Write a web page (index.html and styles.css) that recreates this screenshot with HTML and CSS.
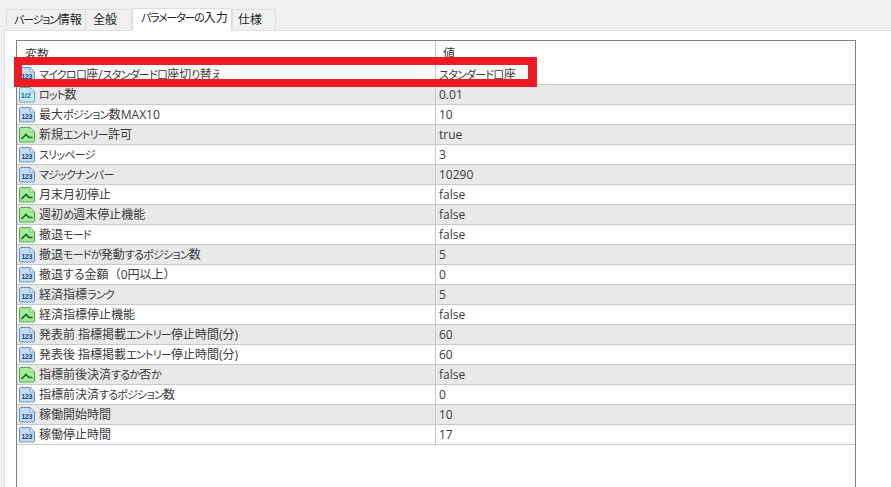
FILE: index.html
```html
<!DOCTYPE html>
<html lang="ja">
<head>
<meta charset="utf-8">
<title>パラメーターの入力</title>
<link rel="stylesheet" href="styles.css">
</head>
<body>
<svg class="defs" width="0" height="0" aria-hidden="true">
  <symbol id="i-int" viewBox="0 0 16 16">
    <path d="M0.5 2 Q0.5 0.5 2 0.5 H11 L15.5 5 V14 L14 15.5 L12.5 14.5 L11 15.5 L9.5 14.5 L8 15.5 L6.5 14.5 L5 15.5 L3.5 14.5 L2 15.5 L0.5 14.5 Z" fill="#c4dcf2" stroke="#5f8fc0"/>
    <path d="M11 0.5 V5 H15.5 Z" fill="#eaf3fb" stroke="#5f8fc0" stroke-width=".6"/>
    <text x="7.9" y="12.4" class="ic-t" fill="#0c3f7c">123</text>
  </symbol>
  <symbol id="i-dbl" viewBox="0 0 16 16">
    <path d="M0.5 2 Q0.5 0.5 2 0.5 H11 L15.5 5 V14 L14 15.5 L12.5 14.5 L11 15.5 L9.5 14.5 L8 15.5 L6.5 14.5 L5 15.5 L3.5 14.5 L2 15.5 L0.5 14.5 Z" fill="#bfecf3" stroke="#59aabf"/>
    <path d="M11 0.5 V5 H15.5 Z" fill="#e9f9fb" stroke="#59aabf" stroke-width=".6"/>
    <text x="6.8" y="10.6" class="ic-h" fill="#1b6fa8">1/2</text>
  </symbol>
  <symbol id="i-bool" viewBox="0 0 16 16">
    <path d="M0.5 2 Q0.5 0.5 2 0.5 H11 L15.5 5 V14 L14 15.5 L12.5 14.5 L11 15.5 L9.5 14.5 L8 15.5 L6.5 14.5 L5 15.5 L3.5 14.5 L2 15.5 L0.5 14.5 Z" fill="#a4ec98" stroke="#4ea84a"/>
    <path d="M11 0.5 V5 H15.5 Z" fill="#dcf8d6" stroke="#4ea84a" stroke-width=".6"/>
    <path d="M2.5 12 L7 7.5 L10 10.5 H13.5" fill="none" stroke="#0f6a1c" stroke-width="1.6"/>
  </symbol>
</svg>

<nav class="tabs">
  <span class="tab"><span class="k">バージョン</span>情報</span>
  <span class="tab">全般</span>
  <span class="tab tab-active"><span class="k">パラメーターの</span>入力</span>
  <span class="tab">仕様</span>
</nav>

<main class="panel">
  <section class="list">
    <div class="row head"><div class="name">変数</div><div class="val">値</div></div>
    <div class="row"><div class="name"><svg class="ic"><use href="#i-int"/></svg><span class="k">マイクロ口</span>座/<span class="k">スタンダード口</span>座切<span class="k">り</span>替<span class="k">え</span></div><div class="val"><span class="k">スタンダード口</span>座</div></div>
    <div class="row"><div class="name"><svg class="ic"><use href="#i-dbl"/></svg><span class="k">ロット</span>数</div><div class="val">0.01</div></div>
    <div class="row"><div class="name"><svg class="ic"><use href="#i-int"/></svg>最大<span class="k">ポジション</span>数MAX10</div><div class="val">10</div></div>
    <div class="row"><div class="name"><svg class="ic"><use href="#i-bool"/></svg>新規<span class="k">エントリー</span>許可</div><div class="val">true</div></div>
    <div class="row"><div class="name"><svg class="ic"><use href="#i-int"/></svg><span class="k">スリッページ</span></div><div class="val">3</div></div>
    <div class="row"><div class="name"><svg class="ic"><use href="#i-int"/></svg><span class="k">マジックナンバー</span></div><div class="val">10290</div></div>
    <div class="row"><div class="name"><svg class="ic"><use href="#i-bool"/></svg>月末月初停止</div><div class="val">false</div></div>
    <div class="row"><div class="name"><svg class="ic"><use href="#i-bool"/></svg>週初<span class="k">め</span>週末停止機能</div><div class="val">false</div></div>
    <div class="row"><div class="name"><svg class="ic"><use href="#i-bool"/></svg>撤退<span class="k">モード</span></div><div class="val">false</div></div>
    <div class="row"><div class="name"><svg class="ic"><use href="#i-int"/></svg>撤退<span class="k">モードが</span>発動<span class="k">するポジション</span>数</div><div class="val">5</div></div>
    <div class="row"><div class="name"><svg class="ic"><use href="#i-int"/></svg>撤退する金額<span class="fw">（</span>0円以上<span class="fw">）</span></div><div class="val">0</div></div>
    <div class="row"><div class="name"><svg class="ic"><use href="#i-int"/></svg>経済指標<span class="k">ランク</span></div><div class="val">5</div></div>
    <div class="row"><div class="name"><svg class="ic"><use href="#i-bool"/></svg>経済指標停止機能</div><div class="val">false</div></div>
    <div class="row"><div class="name"><svg class="ic"><use href="#i-int"/></svg>発表前 指標掲載<span class="k">エントリー</span>停止時間(分)</div><div class="val">60</div></div>
    <div class="row"><div class="name"><svg class="ic"><use href="#i-int"/></svg>発表後 指標掲載<span class="k">エントリー</span>停止時間(分)</div><div class="val">60</div></div>
    <div class="row"><div class="name"><svg class="ic"><use href="#i-bool"/></svg>指標前後決済<span class="k">するか</span>否<span class="k">か</span></div><div class="val">false</div></div>
    <div class="row"><div class="name"><svg class="ic"><use href="#i-int"/></svg>指標前決済<span class="k">するポジション</span>数</div><div class="val">0</div></div>
    <div class="row"><div class="name"><svg class="ic"><use href="#i-int"/></svg>稼働開始時間</div><div class="val">10</div></div>
    <div class="row"><div class="name"><svg class="ic"><use href="#i-int"/></svg>稼働停止時間</div><div class="val">17</div></div>
  </section>
</main>

<div class="highlight"></div>
</body>
</html>
```

FILE: styles.css
```css
* { box-sizing: border-box; }
html, body { margin: 0; height: 487px; overflow: hidden; background: #f0f0f0; }
body {
  position: relative;
  font: 12px/20px "Open Sans", "Noto Sans CJK JP", sans-serif;
  font-feature-settings: "palt";
  color: #3a3a3a;
}
.defs { display: none; }
.ic-t { font: bold 6.6px "Liberation Sans", sans-serif; text-anchor: middle; }
.ic-h { font: bold 7.4px "Liberation Sans", sans-serif; text-anchor: middle; }
.k { font-size: 11px; letter-spacing: -0.75px; }
.fw { font-feature-settings: normal; }

.tabs {
  display: flex;
  align-items: flex-end;
  height: 30px;
  padding-left: 6px;
}
.tab {
  height: 21px;
  line-height: 20px;
  background: #f0f0f0;
  border: 1px solid #dedede;
  border-bottom: 0;
  white-space: nowrap;
  color: #222;
}
.tab .k { letter-spacing: -1.2px; }
.tab:nth-child(1) { width: 80px; padding-left: 7px; }
.tab:nth-child(2) { width: 47px; margin-left: -1px; padding-left: 7px; }
.tab:nth-child(3) { width: 100px; padding-left: 8px; }
.tab:nth-child(4) { width: 44px; padding-left: 5px; }
.tab-active {
  position: relative;
  height: 23px;
  line-height: 18px;
  background: #fff;
  margin-bottom: -1px;
  z-index: 1;
}

.panel {
  height: 457px;
  margin-left: 4px;
  padding: 9px 0 0 11px;
  border-top: 1px solid #dedede;
  border-left: 1px solid #dedede;
  background: #fff;
}
.list {
  width: 840px;
  height: 500px;
  border: 1px solid #808080;
}

.row {
  display: flex;
  height: 20px;
  border-bottom: 1px solid #c8c8c8;
}
.row:nth-child(odd) { background: #e9e9e9; }
.row.head { height: 24px; background: #fff; border-bottom: 0; }
.name {
  display: flex;
  align-items: center;
  width: 419px;
  padding-left: 2px;
  border-right: 1px solid #c8c8c8;
  white-space: pre;
}
.ic { width: 16px; height: 16px; margin-right: 4px; flex: none; }
.val {
  padding-left: 3px;
  white-space: nowrap;
}
.head .name { padding-left: 8px; padding-top: 3px; }
.head .val { padding-left: 7px; padding-top: 3px; }

.highlight {
  position: absolute;
  left: 14px;
  top: 57px;
  width: 523px;
  height: 30px;
  border: solid #ed1c24;
  border-width: 8px 9px 8px 8px;
}
```
